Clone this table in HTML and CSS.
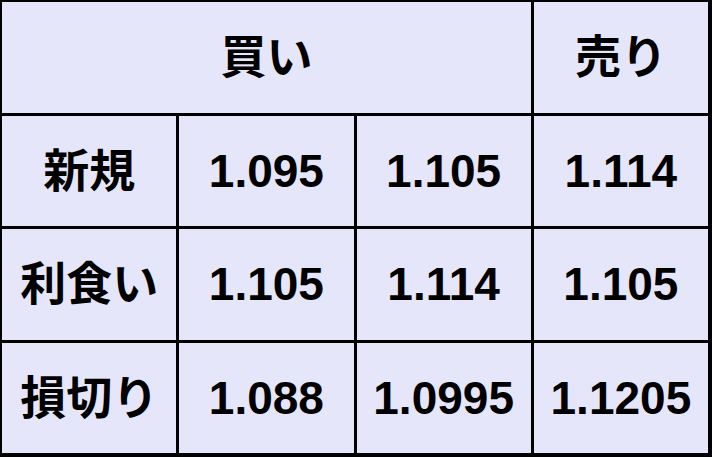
FILE: index.html
```html
<!DOCTYPE html>
<html lang="ja">
<head>
<meta charset="utf-8">
<link rel="stylesheet" href="styles.css">
</head>
<body>
<div class="table">
  <div class="cell span3">買い</div>
  <div class="cell">売り</div>
  <div class="cell">新規</div>
  <div class="cell">1.095</div>
  <div class="cell">1.105</div>
  <div class="cell">1.114</div>
  <div class="cell">利食い</div>
  <div class="cell">1.105</div>
  <div class="cell">1.114</div>
  <div class="cell">1.105</div>
  <div class="cell">損切り</div>
  <div class="cell">1.088</div>
  <div class="cell">1.0995</div>
  <div class="cell">1.1205</div>
</div>
</body>
</html>
```

FILE: styles.css
```css
html, body {
  margin: 0;
  padding: 0;
  background: #ffffff;
}
.table {
  box-sizing: border-box;
  width: 712px;
  height: 457px;
  padding: 2px 4px 4px 2px;
  background: #000000;
  display: grid;
  grid-template-columns: repeat(4, 1fr);
  grid-template-rows: repeat(4, 1fr);
  gap: 3px;
  font-family: "Liberation Sans", "Noto Sans CJK JP", sans-serif;
  font-weight: bold;
  font-size: 46px;
  color: #000000;
}
.cell {
  background: #e6e6fa;
  display: flex;
  align-items: center;
  justify-content: center;
  line-height: 1;
}
.span3 {
  grid-column: span 3;
}
```
